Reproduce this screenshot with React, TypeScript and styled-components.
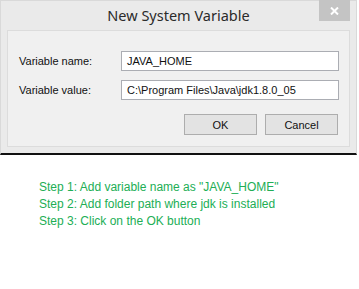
import styled, { createGlobalStyle } from "styled-components";

const GlobalStyle = createGlobalStyle`
	html, body {
		margin: 0;
		padding: 0;
		background: #fff;
	}
	* {
		box-sizing: border-box;
	}
`;

const Page = styled.div`
	width: 359px;
	height: 289px;
	overflow: hidden;
	background: #fff;
`;

const Window = styled.div`
	width: 357px;
	height: 155px;
	background: #eaeaea;
	border: 1px solid #d9d9d9;
	border-bottom: 2px solid #111;
	padding: 0 6px 6px 6px;
	display: flex;
	flex-direction: column;
`;

const TitleBar = styled.div`
	position: relative;
	height: 29px;
	display: flex;
	align-items: center;
	justify-content: center;
	font-family: "Noto Sans", "Open Sans", sans-serif;
	font-size: 14.5px;
	color: #2b2b2b;
	padding-bottom: 2px;
`;

const CloseButton = styled.div`
	position: absolute;
	top: -1px;
	right: 0;
	width: 31px;
	height: 21px;
	background: #c4c4c4;
	display: flex;
	align-items: center;
	justify-content: center;
`;

const Panel = styled.div`
	flex: 1;
	background: #f0f0f0;
	border: 1px solid #dcdcdc;
	padding: 20px 9px 0 10px;
	font-family: "Liberation Sans", Arial, sans-serif;
	font-size: 11px;
	color: #111;
`;

const FormGrid = styled.div`
	display: grid;
	grid-template-columns: 103px 218px;
	row-gap: 9px;
	align-items: center;
`;

const Label = styled.label`
	padding-left: 1px;
`;

const Field = styled.div`
	height: 20px;
	background: #fff;
	border: 1px solid #abadb3;
	display: flex;
	align-items: center;
	padding-left: 5px;
	white-space: nowrap;
`;

const ButtonRow = styled.div`
	display: flex;
	justify-content: flex-end;
	gap: 8px;
	margin-top: 14px;
	padding-right: 2px;
`;

const Button = styled.button`
	width: 73px;
	height: 21px;
	background: #e3e3e3;
	border: 1px solid #adadad;
	font-family: "Liberation Sans", Arial, sans-serif;
	font-size: 11px;
	color: #111;
	padding: 0;
`;

const Steps = styled.div`
	padding: 24px 0 0 39px;
	font-family: "Liberation Sans", Arial, sans-serif;
	font-size: 12px;
	line-height: 17px;
	color: #21ae55;
`;

const steps = [
	'Step 1: Add variable name as "JAVA_HOME"',
	"Step 2: Add folder path where jdk is installed",
	"Step 3: Click on the OK button",
];

export default function App() {
	return (
		<Page>
			<GlobalStyle />
			<Window>
				<TitleBar>
					New System Variable
					<CloseButton>
						<svg width="9" height="8" viewBox="0 0 9 8">
							<path d="M1 0.5 L8 7.5 M8 0.5 L1 7.5" stroke="#fff" strokeWidth="2" />
						</svg>
					</CloseButton>
				</TitleBar>
				<Panel>
					<FormGrid>
						<Label>Variable name:</Label>
						<Field>JAVA_HOME</Field>
						<Label>Variable value:</Label>
						<Field>C:\Program Files\Java\jdk1.8.0_05</Field>
					</FormGrid>
					<ButtonRow>
						<Button>OK</Button>
						<Button>Cancel</Button>
					</ButtonRow>
				</Panel>
			</Window>
			<Steps>
				{steps.map((s, idx) => (
					<div key={idx}>{s}</div>
				))}
			</Steps>
		</Page>
	);
}
